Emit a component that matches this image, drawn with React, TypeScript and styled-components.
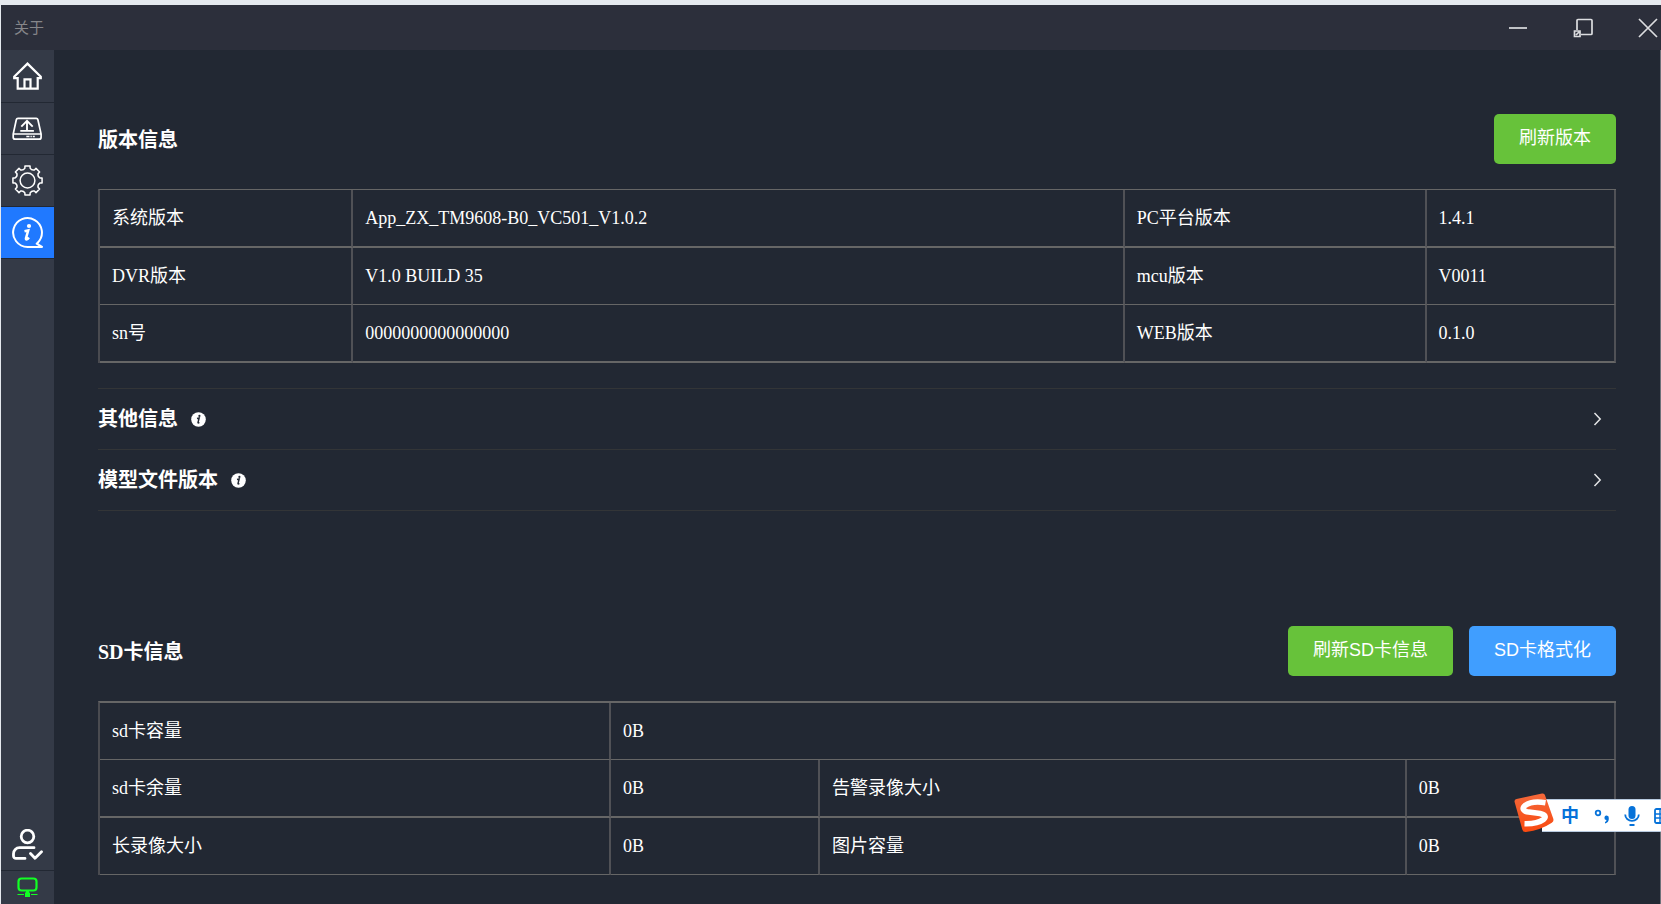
import React from "react";
import styled, { createGlobalStyle } from "styled-components";

const GlobalStyle = createGlobalStyle`
  *, *::before, *::after { box-sizing: border-box; }
  body {
    margin: 0;
    background: #222833;
    color: #fff;
    font-family: "Liberation Serif", "Noto Sans CJK SC", serif;
  }
  button { border: 0; padding: 0; background: none; color: inherit; cursor: pointer; }
  svg { display: block; flex: none; }
`;

const Window = styled.div`
  min-height: 100vh;
  display: flex;
  flex-direction: column;
  border-top: 5px solid #e5e9ee;
  border-left: 1px solid #e5e9ee;
`;

const TitleBar = styled.header`
  height: 45px;
  flex: none;
  display: flex;
  align-items: center;
  justify-content: space-between;
  padding: 0 3px 0 13px;
  background: #2c2f3b;
`;

const Title = styled.h1`
  margin: 0;
  font: 400 15px/20px "Liberation Sans", "Noto Sans CJK SC", sans-serif;
  color: #86868a;
`;

const WindowControls = styled.div`
  display: flex;
  gap: 45px;
`;

const WindowButton = styled.button`
  width: 20px;
  height: 20px;
`;

const Body = styled.div`
  flex: 1;
  display: flex;
`;

const Sidebar = styled.nav`
  width: 53px;
  flex: none;
  display: flex;
  flex-direction: column;
  justify-content: space-between;
  padding-top: 1px;
  background: #343a47;
`;

const NavItem = styled.button<{ $active?: boolean }>`
  width: 100%;
  height: 52px;
  display: flex;
  align-items: center;
  justify-content: center;
  border-bottom: 1px solid #222833;
  background: ${(p) => (p.$active ? "#2079ff" : "transparent")};
`;

const Connection = styled.div`
  height: 33px;
  display: flex;
  align-items: center;
  justify-content: center;
`;

const Main = styled.main`
  flex: 1;
  min-width: 0;
  display: flex;
  flex-direction: column;
  gap: 115px;
  padding: 64px 44px 28px;
  border-right: 1px solid #6e727a;
`;

const SectionHead = styled.div`
  display: flex;
  align-items: center;
  justify-content: space-between;
  margin-bottom: 25px;
`;

const Heading = styled.h2`
  margin: 0;
  font-size: 20px;
  line-height: 28px;
  font-weight: 700;

  ${SectionHead} > & { padding-top: 2px; }
`;

const Actions = styled.div`
  display: flex;
  gap: 16px;
`;

const ActionButton = styled.button<{ $color: string }>`
  height: 50px;
  padding: 0 25px 2px;
  border-radius: 5px;
  background: ${(p) => p.$color};
  font: 400 18px/24px "Liberation Sans", "Noto Sans CJK SC", sans-serif;
`;

const DataTable = styled.table<{ $top: number }>`
  width: 100%;
  table-layout: fixed;
  border-collapse: separate;
  border-spacing: 0;
  border-top: ${(p) => p.$top}px solid #666;
  border-left: 2px solid #4a4b50;
`;

const Col = styled.col<{ $width: number }>`
  width: ${(p) => p.$width}%;
`;

const Row = styled.tr<{ $line: number }>`
  height: ${(p) => 56 + p.$line}px;
  & > * { border-bottom: ${(p) => p.$line}px solid #666; }
`;

const cell = `
  padding: 0 12px;
  border-right: 2px solid #505156;
  font-size: 18px;
  line-height: 24px;
  font-weight: 400;
  text-align: left;
`;
const Label = styled.th`${cell}`;
const Value = styled.td`${cell}`;

const Folds = styled.div`
  margin-top: 25px;
  border-top: 1px solid #333537;
`;

const Fold = styled.button`
  width: 100%;
  height: 61px;
  display: flex;
  align-items: center;
  gap: 13px;
  padding-right: 14px;
  border-bottom: 1px solid #333537;
  font-family: inherit;
`;

const Spacer = styled.span`
  flex: 1;
`;

const ImeBar = styled.aside`
  position: fixed;
  right: 0;
  bottom: 71px;
  width: 147px;
  height: 40px;
  display: flex;
  align-items: center;
  overflow: hidden;
`;

const ImeStrip = styled.div`
  flex: none;
  height: 33px;
  display: flex;
  align-items: center;
  gap: 14px;
  margin: 5px 0 0 -12px;
  padding-left: 18px;
  border: solid #b9cbe0;
  border-width: 1px 0;
  background: #fff;
  color: #0672d9;
`;

const ImeLogo = styled.div`
  position: relative;
  z-index: 1;
`;

const ImeMode = styled.button`
  width: 20px;
  font: 700 18px/24px "Liberation Sans", "Noto Sans CJK SC", sans-serif;
`;

const ImeButton = styled.button``;

const gearPoint = (deg: number, r: number) => {
  const a = (deg * Math.PI) / 180;
  return `${(15.5 + r * Math.sin(a)).toFixed(2)} ${(15.5 - r * Math.cos(a)).toFixed(2)}`;
};
const gearPath =
  [0, 45, 90, 135, 180, 225, 270, 315]
    .map(
      (a, i) =>
        `${i ? "L" : "M"}${gearPoint(a - 10, 14.8)}L${gearPoint(a + 10, 14.8)}L${gearPoint(a + 12, 12.6)}A4 4 0 0 0 ${gearPoint(a + 33, 12.6)}`
    )
    .join("") + "Z";

const NavSvg = ({ children, width = 1.7 }: { children: React.ReactNode; width?: number }) => (
  <svg width="31" height="31" viewBox="0 0 31 31" fill="none" stroke="#fff" strokeWidth={width}>
    {children}
  </svg>
);

const HomeIcon = () => (
  <NavSvg width={2.2}>
    <path d="M15.500 2.600 2.200 15.800v1.400h3.500v10.500h20V17.200h3.100v-1.400z" />
    <path d="M12.500 27.500v-9.200h6v9.200" />
  </NavSvg>
);
const DiskIcon = () => (
  <NavSvg>
    <path d="M6 5.300h18.200q1.400 0 1.700 1.400l3.200 14.300v3.200q0 2-2 2H3.200q-2 0-2-2V21L4.300 6.700q.3-1.400 1.700-1.400zM1.500 21h27.500" />
    <path d="M15 17.500V7.800M9.300 13.700 15 7.800l5.700 5.900M8.300 17.900h13.600" strokeWidth="1.900" />
    <path d="M14.300 23.500h3.200M18.500 23.500h1.300M20.800 23.500h2" />
  </NavSvg>
);
const GearIcon = () => (
  <NavSvg width={1.5}>
    <path d={gearPath} strokeLinejoin="round" />
    <circle cx="15.500" cy="15.500" r="7.400" />
  </NavSvg>
);
const InfoIcon = () => (
  <NavSvg width={2}>
    <path d="M15.500 29.900A14.400 14.400 0 1 1 25.700 25.700L24.700 26.700 30 29.900Z" strokeLinejoin="round" />
    <circle cx="17" cy="9" r="2.100" fill="#fff" stroke="none" />
    <path d="M12.500 14.300 16.200 13.500 14 21.200q-.4 1.500.9 1.100 1-.3 2-1.700" strokeWidth="2.500" />
  </NavSvg>
);
const UserIcon = () => (
  <NavSvg width={2.8}>
    <circle cx="15.500" cy="7.500" r="6.300" />
    <path
      d="M22 18.700H7.500a6 6 0 0 0-6 6v2.200a2.500 2.500 0 0 0 2.500 2.500h9M18.500 24.500l4.500 4.700 6.500-6.500"
      strokeLinecap="round"
      strokeLinejoin="round"
    />
  </NavSvg>
);
const NetworkIcon = () => (
  <svg width="21" height="21" viewBox="0 0 21 21" fill="none" stroke="#12ff24">
    <rect x="1.500" y="1.500" width="18" height="12" rx="3" strokeWidth="2.200" />
    <path d="M10.500 13.500v3" strokeWidth="3" />
    <path d="M8 15.500h5v4.500H8z" fill="#12ff24" stroke="none" />
    <path d="M.5 17.500h6.500M14 17.500h6.500" strokeWidth="1.200" />
  </svg>
);

const ControlSvg = ({ d }: { d: string }) => (
  <svg width="20" height="20" viewBox="0 0 20 20" fill="none" stroke="#dcdde0" strokeWidth="1.700">
    <path d={d} />
  </svg>
);

const Hint = () => (
  <svg width="15" height="15" viewBox="0 0 15 15">
    <circle cx="7.500" cy="7.500" r="7.300" fill="#fff" />
    <circle cx="8.400" cy="3.900" r="1.100" fill="#222833" />
    <path d="M6 6.500 8.200 6 7 10.500q-.1.900 1.400 0" fill="none" stroke="#222833" strokeWidth="1.400" />
  </svg>
);
const Chevron = () => (
  <svg width="9" height="14" viewBox="0 0 9 14" fill="none" stroke="#e4e5e7" strokeWidth="1.500">
    <path d="m1.500 1 5.700 6-5.700 6" />
  </svg>
);

const versions = [
  ["系统版本", "App_ZX_TM9608-B0_VC501_V1.0.2", "PC平台版本", "1.4.1"],
  ["DVR版本", "V1.0 BUILD 35", "mcu版本", "V0011"],
  ["sn号", "0000000000000000", "WEB版本", "0.1.0"],
];
const storage = [
  ["sd卡容量", "0B"],
  ["sd卡余量", "0B", "告警录像大小", "0B"],
  ["长录像大小", "0B", "图片容量", "0B"],
];

type InfoTableProps = { rows: string[][]; widths: number[]; lines: number[] };

const InfoTable = ({ rows, widths, lines }: InfoTableProps) => (
  <DataTable $top={lines[0]}>
    <colgroup>
      {widths.map((w, i) => (
        <Col key={i} $width={w} />
      ))}
    </colgroup>
    <tbody>
      {rows.map((row, r) => (
        <Row key={row[0]} $line={lines[r + 1]}>
          <Label scope="row">{row[0]}</Label>
          <Value colSpan={row.length === 2 ? 3 : 1}>{row[1]}</Value>
          {row.length > 2 && <Label scope="row">{row[2]}</Label>}
          {row.length > 2 && <Value>{row[3]}</Value>}
        </Row>
      ))}
    </tbody>
  </DataTable>
);

export default function App() {
  return (
    <>
      <GlobalStyle />
      <Window>
        <TitleBar>
          <Title>关于</Title>
          <WindowControls>
            <WindowButton aria-label="最小化"><ControlSvg d="M1 10h18" /></WindowButton>
            <WindowButton aria-label="还原">
              <ControlSvg d="M4 12V2.500q0-1 1-1h13q1 0 1 1v13q0 1-1 1H8M1.500 13h5.500v5.500H1.500zM3 17l3-3" />
            </WindowButton>
            <WindowButton aria-label="关闭"><ControlSvg d="m1 1 18 18M19 1 1 19" /></WindowButton>
          </WindowControls>
        </TitleBar>
        <Body>
          <Sidebar>
            <div>
              <NavItem aria-label="首页"><HomeIcon /></NavItem>
              <NavItem aria-label="升级"><DiskIcon /></NavItem>
              <NavItem aria-label="设置"><GearIcon /></NavItem>
              <NavItem aria-label="关于" $active><InfoIcon /></NavItem>
            </div>
            <div>
              <NavItem aria-label="用户"><UserIcon /></NavItem>
              <Connection><NetworkIcon /></Connection>
            </div>
          </Sidebar>
          <Main>
            <section>
              <SectionHead>
                <Heading>版本信息</Heading>
                <ActionButton $color="#67c23a">刷新版本</ActionButton>
              </SectionHead>
              <InfoTable rows={versions} widths={[16.7, 50.9, 19.9, 12.5]} lines={[1, 2, 1, 2]} />
              <Folds>
                {["其他信息", "模型文件版本"].map((name) => (
                  <Fold key={name} aria-expanded={false}>
                    <Heading as="span">{name}</Heading>
                    <Hint />
                    <Spacer />
                    <Chevron />
                  </Fold>
                ))}
              </Folds>
            </section>
            <section>
              <SectionHead>
                <Heading>SD卡信息</Heading>
                <Actions>
                  <ActionButton $color="#67c23a">刷新SD卡信息</ActionButton>
                  <ActionButton $color="#409eff">SD卡格式化</ActionButton>
                </Actions>
              </SectionHead>
              <InfoTable rows={storage} widths={[33.7, 13.8, 38.7, 13.8]} lines={[2, 1, 2, 1]} />
            </section>
          </Main>
        </Body>
      </Window>
      <ImeBar>
        <ImeLogo>
          <svg width="40" height="40" viewBox="0 0 40 40">
            <defs>
              <linearGradient id="ime" x1="0" y1="0" x2="0" y2="1">
                <stop offset="0" stopColor="#f4683a" />
                <stop offset="1" stopColor="#f94a10" />
              </linearGradient>
            </defs>
            <path
              d="M2.500 6 28 .6q2.400-.5 3 1.600l8.300 23.500q.8 2.600-1.500 4Q27 37 12 39 9 39.400 8.300 36.500L.6 9Q.1 6.600 2.500 6z"
              fill="url(#ime)"
            />
            <path
              d="M31.500 9.800Q18 7.500 11 12.500q-4.500 4 2 6.300l13 1.700q8 2 3.500 6-6 4.500-19 4.200"
              fill="none"
              stroke="#fff"
              strokeWidth="5.600"
            />
          </svg>
        </ImeLogo>
        <ImeStrip>
          <ImeMode>中</ImeMode>
          <ImeButton aria-label="标点">
            <svg width="16" height="16" viewBox="0 0 16 16">
              <circle cx="4" cy="5" r="2.300" fill="none" stroke="#0672d9" strokeWidth="1.800" />
              <path d="M14.800 10q.3 4.500-3.800 5.500v-1.500q1.400-.6 1.500-2a2.200 2.200 0 1 1 2.300-2z" fill="#0672d9" />
            </svg>
          </ImeButton>
          <ImeButton aria-label="语音">
            <svg width="16" height="20" viewBox="0 0 16 20" fill="none" stroke="#0672d9" strokeWidth="1.800">
              <rect x="4.500" y="0" width="7" height="13" rx="3.500" fill="#0672d9" stroke="none" />
              <path d="M1.200 8.500a6.800 6.400 0 0 0 13.600 0M5.500 19h5" />
            </svg>
          </ImeButton>
          <ImeButton aria-label="键盘">
            <svg width="18" height="16" viewBox="0 0 18 16" fill="none" stroke="#0672d9" strokeWidth="1.800">
              <rect x="1" y="1" width="16" height="14" rx="1.500" />
              <path d="M1 6h16M1 10h16M6 1v14M11 1v14" strokeWidth="1.400" />
            </svg>
          </ImeButton>
        </ImeStrip>
      </ImeBar>
    </>
  );
}
